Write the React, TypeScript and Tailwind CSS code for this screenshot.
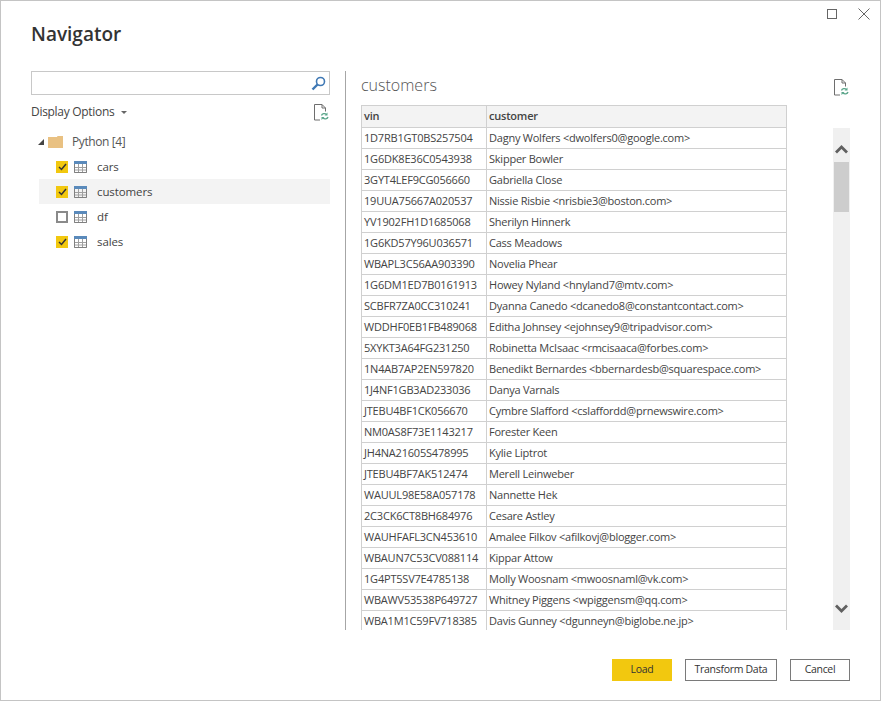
const rows = [
  ['1D7RB1GT0BS257504', 'Dagny Wolfers <dwolfers0@google.com>'],
  ['1G6DK8E36C0543938', 'Skipper Bowler'],
  ['3GYT4LEF9CG056660', 'Gabriella Close'],
  ['19UUA75667A020537', 'Nissie Risbie <nrisbie3@boston.com>'],
  ['YV1902FH1D1685068', 'Sherilyn Hinnerk'],
  ['1G6KD57Y96U036571', 'Cass Meadows'],
  ['WBAPL3C56AA903390', 'Novelia Phear'],
  ['1G6DM1ED7B0161913', 'Howey Nyland <hnyland7@mtv.com>'],
  ['SCBFR7ZA0CC310241', 'Dyanna Canedo <dcanedo8@constantcontact.com>'],
  ['WDDHF0EB1FB489068', 'Editha Johnsey <ejohnsey9@tripadvisor.com>'],
  ['5XYKT3A64FG231250', 'Robinetta McIsaac <rmcisaaca@forbes.com>'],
  ['1N4AB7AP2EN597820', 'Benedikt Bernardes <bbernardesb@squarespace.com>'],
  ['1J4NF1GB3AD233036', 'Danya Varnals'],
  ['JTEBU4BF1CK056670', 'Cymbre Slafford <cslaffordd@prnewswire.com>'],
  ['NM0AS8F73E1143217', 'Forester Keen'],
  ['JH4NA21605S478995', 'Kylie Liptrot'],
  ['JTEBU4BF7AK512474', 'Merell Leinweber'],
  ['WAUUL98E58A057178', 'Nannette Hek'],
  ['2C3CK6CT8BH684976', 'Cesare Astley'],
  ['WAUHFAFL3CN453610', 'Amalee Filkov <afilkovj@blogger.com>'],
  ['WBAUN7C53CV088114', 'Kippar Attow'],
  ['1G4PT5SV7E4785138', 'Molly Woosnam <mwoosnaml@vk.com>'],
  ['WBAWV53538P649727', 'Whitney Piggens <wpiggensm@qq.com>'],
  ['WBA1M1C59FV718385', 'Davis Gunney <dgunneyn@biglobe.ne.jp>'],
];

const tables = [
  { name: 'cars', checked: true },
  { name: 'customers', checked: true, selected: true },
  { name: 'df', checked: false },
  { name: 'sales', checked: true },
];

const RefreshDocIcon = () => (
  <svg width="16" height="17" viewBox="0 0 16 17" fill="none">
    <path d="M1.5 16V.5H9L12.5 4V7.5M9 .5V4H12.5M1.5 16H7" stroke="#6e6e6e" />
    <path d="M8.5 11.5C9 9.5 12 9 13.5 10.5M15 13C14.5 15 11.5 15.5 10 14" stroke="#5aa58a" strokeWidth="1.3" />
    <path d="M14.5 8.5V11.5H11.5Z M8.5 16V13H11.5Z" fill="#5aa58a" />
  </svg>
);

const TableIcon = () => (
  <svg width="13" height="12" viewBox="0 0 13 12" className="shrink-0">
    <rect x="0" y="0" width="13" height="3" fill="#5a8abb" />
    <path d="M.5 3V11.5H12.5V3M.5 6.5H12.5M.5 9H12.5M4.5 3V11.5M8.5 3V11.5" fill="none" stroke="#a0a0a0" />
    <path d="M.5 3V11.5H12.5V3" fill="none" stroke="#808080" />
  </svg>
);

const CheckBox = ({ checked }: { checked: boolean }) =>
  checked ? (
    <span className="w-3 h-3 bg-[#f2c80f] flex items-center justify-center shrink-0">
      <svg width="9" height="8" viewBox="0 0 9 8" fill="none">
        <path d="M1 4L3.5 6.5L8 1" stroke="#333" strokeWidth="1.5" />
      </svg>
    </span>
  ) : (
    <span className="w-3 h-3 border-2 border-[#8a8a8a] bg-white shrink-0" />
  );

export default function App() {
  return (
    <div className="w-[881px] h-[701px] bg-white border border-[#c4c4c4] flex flex-col text-[#444] text-[11px] overflow-hidden font-['Open_Sans',sans-serif]">
      {/* window buttons */}
      <div className="flex justify-end items-center gap-[21px] pt-[4px] pr-[10px] h-[22px]">
        <span className="w-[10px] h-[10px] border border-[#666]" />
        <svg width="12" height="12" viewBox="0 0 12 12" stroke="#666" fill="none">
          <path d="M.5 .5L11.5 11.5M11.5 .5L.5 11.5" />
        </svg>
      </div>

      <h1 className="ml-[30px] mt-[-1px] h-[49px] text-[19px] leading-[24px] font-semibold text-[#333]">Navigator</h1>

      <div className="flex h-[559px]">
        {/* left side */}
        <div className="w-[345px] pl-[30px] pr-[15px] border-r border-[#a6a6a6]">
          <div className="h-6 w-[299px] border border-[#c8c8c8] flex items-center justify-end pr-[3px]">
            <svg width="15" height="15" viewBox="0 0 15 15" fill="none" stroke="#3f78b4" strokeWidth="1.6">
              <circle cx="9.5" cy="5.5" r="4" />
              <path d="M6.5 8.5L1.5 13.5" strokeWidth="2.4" />
            </svg>
          </div>
          <div className="flex items-center justify-between h-[34px] w-[299px] pr-px">
            <div className="flex items-center gap-[7px]">
              <span className="text-[12px] tracking-[-0.3px]">Display Options</span>
              <span className="border-x-[3px] border-x-transparent border-t-[3px] border-t-[#666]" />
            </div>
            <RefreshDocIcon />
          </div>
          <div className="w-[299px]">
            <div className="flex items-center h-[25px] pl-[7px] text-[#555]">
              <span className="border-l-[6px] border-l-transparent border-b-[6px] border-b-[#444]" />
              <svg width="15" height="13" viewBox="0 0 15 13" className="ml-[4px]">
                <path d="M0 2H9L9.5 1H15V13H0Z" fill="#e9c182" />
              </svg>
              <span className="ml-[9px] text-[12px] tracking-[-0.4px]">Python [4]</span>
            </div>
            {tables.map((t) => (
              <div key={t.name} className={`flex items-center h-[25px] ml-2 pl-[17px] ${t.selected ? 'bg-[#f3f3f3]' : ''}`}>
                <CheckBox checked={t.checked} />
                <span className="ml-[6px]"><TableIcon /></span>
                <span className="ml-[10px] text-[11.5px] tracking-[-0.1px]">{t.name}</span>
              </div>
            ))}
          </div>
        </div>

        {/* right side */}
        <div className="flex-1 min-w-0 flex flex-col pl-[15px] overflow-hidden">
          <div className="flex justify-between h-[34px] pr-[31px]">
            <span className="text-[16px] leading-[28px] font-light text-[#555]">customers</span>
            <span className="pt-[8px]"><RefreshDocIcon /></span>
          </div>
          <div className="flex flex-1 min-h-0">
            <div className="w-[426px] overflow-hidden">
              <table className="w-[426px] table-fixed border-collapse">
                <thead>
                  <tr className="bg-[#f3f3f3] h-[22px]">
                    <th className="w-[125px] border border-[#d0d0d0] px-[2px] text-left font-semibold tracking-[-0.2px]">vin</th>
                    <th className="border border-[#d0d0d0] px-[2px] text-left font-semibold tracking-[-0.2px]">customer</th>
                  </tr>
                </thead>
                <tbody>
                  {rows.map((r) => (
                    <tr key={r[0]} className="h-[21px]">
                      <td className="border border-[#d0d0d0] px-[2px] whitespace-nowrap overflow-hidden tracking-[-0.2px]">{r[0]}</td>
                      <td className="border border-[#d0d0d0] px-[2px] whitespace-nowrap overflow-hidden tracking-[-0.23px]">{r[1]}</td>
                    </tr>
                  ))}
                </tbody>
              </table>
            </div>
            {/* scrollbar */}
            <div className="ml-[46px] mt-[23px] w-[17px] bg-[#f0f0f0] flex flex-col items-center">
              <svg width="13" height="9" viewBox="0 0 13 9" className="mt-[17px]" fill="none" stroke="#606060" strokeWidth="2.8">
                <path d="M1 7.5L6.5 2L12 7.5" />
              </svg>
              <div className="mt-[8px] h-[50px] w-[15px] bg-[#cdcdcd]" />
              <svg width="13" height="9" viewBox="0 0 13 9" className="mt-auto mb-[17px]" fill="none" stroke="#606060" strokeWidth="2.8">
                <path d="M1 1.5L6.5 7L12 1.5" />
              </svg>
            </div>
          </div>
        </div>
      </div>

      {/* footer */}
      <div className="flex justify-end gap-[13px] pr-[30px] pt-[29px] text-[10.5px] tracking-[-0.3px] text-[#333]">
        <button className="w-[60px] h-[22px] bg-[#f2c80f]">Load</button>
        <button className="w-[92px] h-[22px] border border-[#7a7a7a]">Transform Data</button>
        <button className="w-[60px] h-[22px] border border-[#7a7a7a]">Cancel</button>
      </div>
    </div>
  );
}
